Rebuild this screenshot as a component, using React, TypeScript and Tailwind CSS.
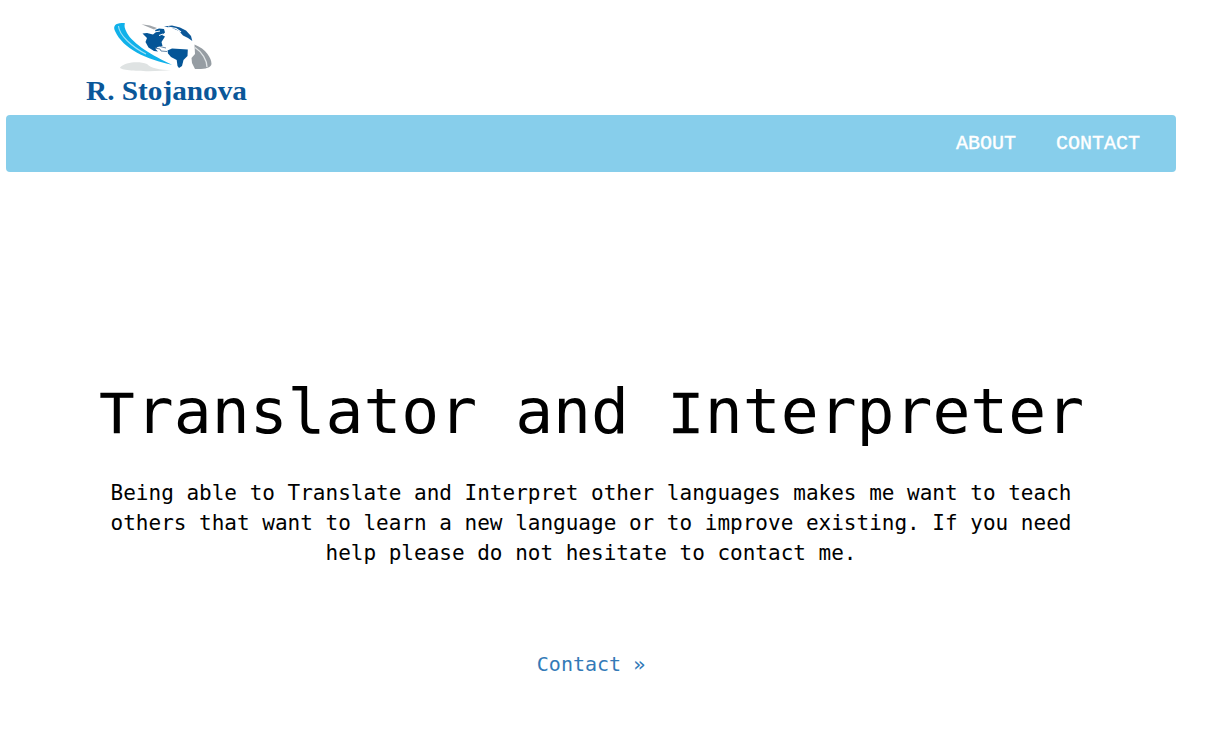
function Logo() {
  return (
    <svg width="164" height="92" viewBox="84 18 164 92" role="img" aria-label="R. Stojanova">
      <path d="M120 67.500C125 62 139 61 147 64C151 68 159 70 171 70C156 72 121 71.500 120 67.500Z" fill="#dfe3e3" />
      <path d="M125 23.300C116 22 112.500 26 115 31C123 49 147 59.500 172 64.700C153 56 133 44 127 33C124.500 28.500 124 25.500 125 23.300Z" fill="#10b1ea" />
      <path d="M118.500 26C119 35 132 47 146 54" fill="none" stroke="#a3e1f7" strokeWidth="1.100" />
      <path d="M141.500 24.200L150 25.500L157 28L154 29.500Z" fill="#a0a5aa" />
      <path d="M142.500 33.500L147 33L153 34.500L156 32L155 30L159 28.500L164 29L165 32.500L162 35L165 36.500L161.500 42L162.500 46L157.500 47L155.500 49L158 51.500L154 51L148.500 47.500L145.500 42L147 38Z" fill="#045597" />
      <path d="M155.500 31.800L160 31M159 35.500L163 34" stroke="white" strokeWidth="1" />
      <path d="M155 48L160 49L161 51L167 51.500M160 46.500L166 48" fill="none" stroke="#55799f" strokeWidth="0.9" />
      <path d="M164 26.500L172 25.500L180 27.500L186 30.500L191 36L192.300 41L188 38L183 35.500L179 31L172 28Z" fill="#0b5798" />
      <path d="M168 27L176 28.500L181 32" stroke="white" fill="none" strokeWidth="1.200" />
      <path d="M167.500 50.500L172 48.500L180 49L187.800 49.500L187.500 56L183.500 60L182 66L179 68L177.500 66L176.700 60L171 57L168 53.500Z" fill="#045597" />
      <path d="M194.500 44.500C206 49 211.500 58 211.500 64C211 68 204 69.500 195 69L192 63L191.500 58L195 54Z" fill="#969da3" />
      <path d="M195 47.500C202 52 207 60 207 67" fill="none" stroke="#e1e5e7" strokeWidth="1.300" />
      <text x="86" y="100" textLength="161" lengthAdjust="spacingAndGlyphs" fill="#0a5799" className="font-['Liberation_Serif',serif] text-[28px] font-bold">R. Stojanova</text>
    </svg>
  );
}

function Capital({ children }: { children: string }) {
  return (
    <span className="inline-block w-[38px] font-['Liberation_Mono',monospace] text-[62px] leading-none [-webkit-text-stroke:0.3px_black]">
      {children}
    </span>
  );
}

export default function App() {
  return (
    <div className="min-h-[745px] w-[1208px] bg-white pl-1.5 font-['DejaVu_Sans_Mono',monospace] text-black">
      <header className="h-[115px] pt-[18px] pl-[78px]">
        <Logo />
      </header>
      <nav className="flex h-[57px] w-[1170px] items-center justify-end gap-10 rounded bg-[#87ceeb] pr-9 font-['Liberation_Mono',monospace] text-[20px] text-white [-webkit-text-stroke:0.4px_white]">
        <a href="#about">ABOUT</a>
        <a href="#contact">CONTACT</a>
      </nav>
      <main className="w-[1170px] pt-[205px] text-center">
        <h1 className="h-[70px] text-[63px] leading-[70px] whitespace-nowrap">
          <Capital>T</Capital>ranslator and <Capital>I</Capital>nterpreter
        </h1>
        <p className="mx-auto mt-[31px] w-[970px] text-[21px] leading-[30px]">
          Being able to Translate and Interpret other languages makes me want to teach others that want to learn a new language or to improve existing. If you need help please do not hesitate to contact me.
        </p>
        <a href="#contact" className="mt-[81px] inline-block text-[20px] leading-[30px] text-[#337ab7]">Contact »</a>
      </main>
    </div>
  );
}
